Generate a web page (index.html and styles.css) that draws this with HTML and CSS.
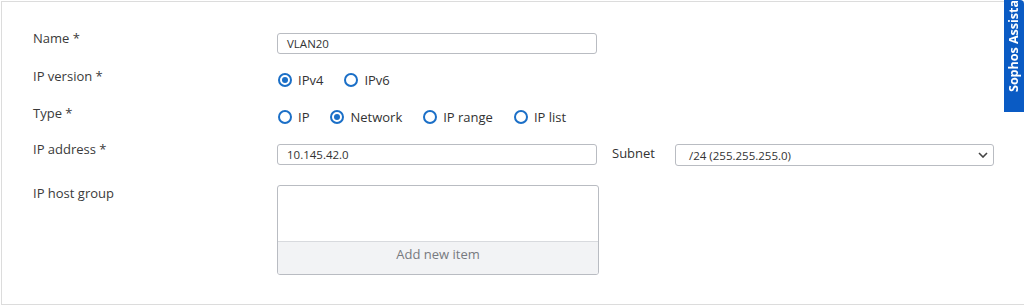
FILE: index.html
```html
<!DOCTYPE html>
<html lang="en">
<head>
  <meta charset="UTF-8" />
  <title>Add IP host</title>
  <link rel="stylesheet" href="styles.css">
</head>
<body>

<div class="panel">
  <div class="form-row">
    <div class="label">Name *</div>
    <div class="field"><div class="input">VLAN20</div></div>
  </div>

  <div class="form-row radio-row">
    <div class="label">IP version *</div>
    <div class="field radios">
      <span class="radio checked"></span><span class="radio-text">IPv4</span>
      <span class="radio"></span><span class="radio-text">IPv6</span>
    </div>
  </div>

  <div class="form-row radio-row">
    <div class="label">Type *</div>
    <div class="field radios">
      <span class="radio"></span><span class="radio-text">IP</span>
      <span class="radio checked"></span><span class="radio-text">Network</span>
      <span class="radio"></span><span class="radio-text">IP range</span>
      <span class="radio"></span><span class="radio-text">IP list</span>
    </div>
  </div>

  <div class="form-row address-row">
    <div class="label">IP address *</div>
    <div class="field"><div class="input">10.145.42.0</div></div>
    <div class="sub-label">Subnet</div>
    <div class="select">
      <span>/24 (255.255.255.0)</span>
      <svg width="10" height="6" viewBox="0 0 10 6"><path d="M1 1l4 4 4-4" fill="none" stroke="#444" stroke-width="1.6"/></svg>
    </div>
  </div>

  <div class="form-row host-row">
    <div class="label">IP host group</div>
    <div class="host-box">
      <div class="host-list"></div>
      <div class="host-add">Add new item</div>
    </div>
  </div>
</div>

<div class="assistant">Sophos Assistant</div>

</body>
</html>
```

FILE: styles.css
```css
* { box-sizing: border-box; }
html, body {
  margin: 0;
  padding: 0;
  background: #ffffff;
  font-family: "Open Sans", "Liberation Sans", sans-serif;
  font-size: 13px;
  color: #333;
  overflow: hidden;
  width: 100%;
  height: 100%;
}

.panel {
  margin: 1px 0 0 1px;
  height: 304px;
  border: 1px solid #dcdcdc;
  border-right: none;
  padding: 31px 0 0 31px;
}

.form-row {
  display: flex;
  align-items: flex-start;
  margin-bottom: 16px;
}

.label {
  width: 244px;
  line-height: 16px;
  margin-top: -3px;
  color: #3a3a3a;
}

.field {
  width: 320px;
}

.input {
  height: 21px;
  border: 1px solid #b9bcc2;
  border-radius: 3px;
  padding: 0 9px;
  line-height: 19px;
  font-size: 11.5px;
}

.radio-row {
  height: 20px;
  margin-bottom: 17px;
}
.radio-row .label { margin-top: -2px; }

.radios {
  display: flex;
  align-items: center;
  height: 20px;
}

.radio {
  width: 14px;
  height: 14px;
  border: 2px solid #1b6fc7;
  border-radius: 50%;
  margin-left: 1px;
  display: flex;
  align-items: center;
  justify-content: center;
}

.radio.checked::after {
  content: "";
  width: 6px;
  height: 6px;
  border-radius: 50%;
  background: #1b6fc7;
}

.radio-text {
  margin: 0 20px 0 6px;
}

.address-row { margin-bottom: 19px; }

.sub-label {
  margin: 0 0 0 15px;
  width: 63px;
  line-height: 18px;
}

.select {
  width: 319px;
  height: 22px;
  border: 1px solid #b9bcc2;
  border-radius: 3px;
  padding: 0 5px 0 13px;
  display: flex;
  align-items: center;
  justify-content: space-between;
  font-size: 11.5px;
}

.host-row .label { margin-top: 0; }

.host-box {
  width: 322px;
  height: 90px;
  border: 1px solid #b9bcc2;
  border-radius: 3px;
  display: flex;
  flex-direction: column;
  overflow: hidden;
}

.host-list { height: 55px; }

.host-add {
  flex: 1;
  background: #f2f3f5;
  border-top: 1px solid #d8dade;
  text-align: center;
  line-height: 24px;
  color: #777a80;
}

.assistant {
  position: fixed;
  top: 0;
  right: 0;
  width: 20px;
  height: 112px;
  background: #0a5bc4;
  border-bottom-left-radius: 4px;
  color: #fff;
  font-weight: bold;
  font-size: 12.5px;
  writing-mode: vertical-rl;
  transform: rotate(180deg);
  line-height: 20px;
  padding-top: 20px;
  overflow: hidden;
  white-space: nowrap;
}
```
